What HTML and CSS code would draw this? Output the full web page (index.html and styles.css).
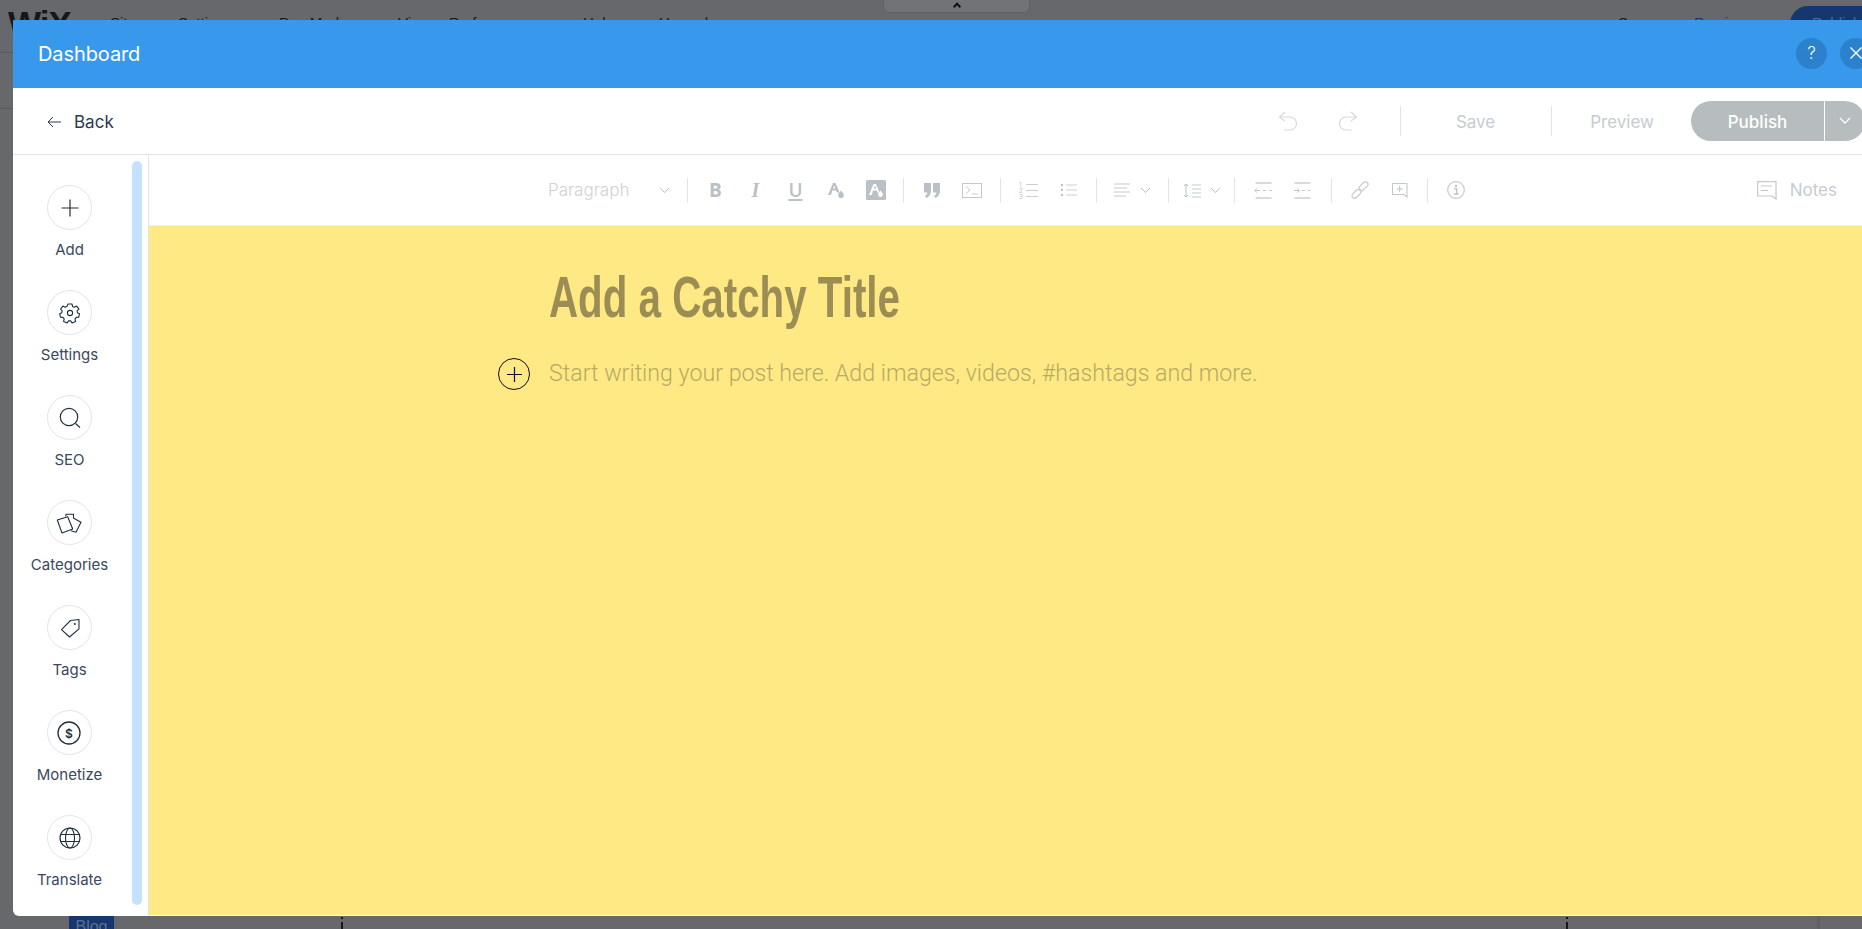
FILE: index.html
```html
<!DOCTYPE html>
<html lang="en">
<head>
<meta charset="utf-8">
<title>Dashboard</title>
<link rel="stylesheet" href="styles.css">
</head>
<body>
<div class="editor">
  <div class="editor-top">
    <span class="logo">WiX</span>
    <nav class="editor-nav"><span>Site</span><span>Settings</span><span>Dev Mode</span><span>View</span><span>Preferences</span><span>Help</span><span>Upgrade</span></nav>
    <div class="editor-tab"><svg width="10" height="7" viewBox="0 0 12 8"><path d="M2 6l4-4 4 4" fill="none" stroke="#111" stroke-width="2.500"/></svg></div>
    <div class="editor-actions"><span class="ea-save">Save</span><span class="ea-preview">Preview</span><span class="ea-publish">Publish</span></div>
  </div>
  <div class="editor-sub"></div>
  <div class="editor-fill"></div>
  <div class="editor-foot">
    <span class="blog-chip">Blog</span>
    <i class="tick tick-a"></i>
    <i class="tick tick-b"></i>
    <i class="foot-panel"></i>
  </div>
</div>

<section class="modal">
  <header class="modal-head">
    <h1 class="modal-title">Dashboard</h1>
    <div class="head-btns">
      <button class="round-btn">?</button>
      <button class="round-btn"><svg width="16" height="16" viewBox="0 0 16 16"><path d="M2.500 2.500l11 11M13.500 2.500l-11 11" stroke="#fff" stroke-width="1.400" fill="none"/></svg></button>
    </div>
  </header>

  <div class="actionbar">
    <div class="back">
      <svg width="14" height="12" viewBox="0 0 14 12"><path d="M14 6H1M6 1L1 6l5 5" fill="none" stroke="#2b3a4f" stroke-width="1"/></svg>
      <span>Back</span>
    </div>
    <div class="actions">
      <svg class="ico-undo" width="20" height="20" viewBox="0 0 20 20"><path d="M7 1L1.500 6 7 10M2 6h10a6.500 6.500 0 0 1 0 13H6" fill="none" stroke="#d5dade" stroke-width="1.200"/></svg>
      <svg class="ico-redo" width="20" height="20" viewBox="0 0 20 20"><path d="M13 1l5.500 5L13 10M18 6H8a6.500 6.500 0 0 0 0 13h6" fill="none" stroke="#d5dade" stroke-width="1.200"/></svg>
      <i class="act-sep"></i>
      <span class="act-save">Save</span>
      <i class="act-sep"></i>
      <span class="act-preview">Preview</span>
      <div class="publish">
        <span class="publish-main">Publish</span>
        <span class="publish-more"><svg width="12" height="8" viewBox="0 0 12 8"><path d="M1 1l5 5 5-5" fill="none" stroke="#fff" stroke-width="1.300"/></svg></span>
      </div>
    </div>
  </div>

  <div class="body">
    <aside class="side">
      <div class="side-list">
        <div class="side-item"><span class="side-circle"><svg width="20" height="20" viewBox="0 0 20 20"><path d="M10 1.500v17M1.500 10h17" stroke="#20303c" stroke-width="1.200" fill="none"/></svg></span><span class="side-label">Add</span></div>
        <div class="side-item"><span class="side-circle"><svg width="22" height="22" viewBox="0 0 22 22"><path d="M9 2h4l.6 2.500 1.700.8 2.300-1.200 2.300 3-1.800 1.800.3 1.900 2.100 1-.8 3.500-2.500.1-1.200 1.500.6 2.500-3.500 1.500-1.500-2h-2l-1.500 2-3.500-1.500.6-2.500-1.200-1.500-2.500-.1-.8-3.500 2.100-1 .3-1.900L1.600 7.100l2.300-3 2.300 1.200 1.700-.8z" fill="none" stroke="#20303c" stroke-width="1.100" stroke-linejoin="round"/><circle cx="11" cy="11" r="2.600" fill="none" stroke="#20303c" stroke-width="1.100"/></svg></span><span class="side-label">Settings</span></div>
        <div class="side-item"><span class="side-circle"><svg width="22" height="22" viewBox="0 0 22 22"><circle cx="10" cy="10" r="8.700" fill="none" stroke="#20303c" stroke-width="1.200"/><path d="M16.500 16.500l4.500 4" stroke="#20303c" stroke-width="1.200" fill="none"/></svg></span><span class="side-label">SEO</span></div>
        <div class="side-item"><span class="side-circle"><svg width="26" height="24" viewBox="0 0 26 24"><path d="M1.300 9l10.400-3.300 5 12.300L6 22z" fill="none" stroke="#20303c" stroke-width="1.100" stroke-linejoin="round"/><path d="M9.700 5.300l.3-2h7.500V7M17.300 7L25 11.300 20 21.300 15 19.700" fill="none" stroke="#20303c" stroke-width="1.100" stroke-linejoin="round"/></svg></span><span class="side-label">Categories</span></div>
        <div class="side-item"><span class="side-circle"><svg width="22" height="22" viewBox="0 0 22 22"><path d="M20 2.500v9.300L10.500 20 2.500 12.700 11.500 3.500z" fill="none" stroke="#20303c" stroke-width="1.100" stroke-linejoin="round"/><circle cx="15.800" cy="7" r="1" fill="#20303c"/></svg></span><span class="side-label">Tags</span></div>
        <div class="side-item"><span class="side-circle"><svg width="24" height="24" viewBox="0 0 24 24"><circle cx="12" cy="12" r="11" fill="none" stroke="#20303c" stroke-width="1.300"/><text x="12" y="16.500" class="dollar">$</text></svg></span><span class="side-label">Monetize</span></div>
        <div class="side-item"><span class="side-circle"><svg width="22" height="22" viewBox="0 0 22 22"><circle cx="11" cy="11" r="10" fill="none" stroke="#20303c" stroke-width="1.200"/><ellipse cx="11" cy="11" rx="4.500" ry="10" fill="none" stroke="#20303c" stroke-width="1.100"/><path d="M2 7.500h18M2 14.500h18" stroke="#20303c" stroke-width="1.100" fill="none"/></svg></span><span class="side-label">Translate</span></div>
      </div>
      <div class="side-scroll"></div>
    </aside>

    <main class="main">
      <div class="toolbar">
        <div class="para"><span>Paragraph</span><svg width="11" height="7" viewBox="0 0 11 7"><path d="M1 1l4.500 4.500L10 1" fill="none" stroke="#b9c1c6" stroke-width="1"/></svg></div>
        <i class="tsep"></i>
        <span class="tbtn tb-b">B</span>
        <span class="tbtn tb-i">I</span>
        <span class="tbtn tb-u">U</span>
        <span class="tbtn"><svg width="18" height="18" viewBox="0 0 18 18"><path d="M1 14L6 2h2.500l4 9.500H9.800L9 9.500H5.300L4 14zM6 7.500h2.400L7.200 4.500z" fill="#b9c1c6"/><path d="M14 9.500c1.500 2 2.800 3.200 2.800 4.700a2.800 2.800 0 0 1-5.600 0c0-1.500 1.300-2.700 2.800-4.700z" fill="#b9c1c6"/></svg></span>
        <span class="tbtn"><svg width="20" height="20" viewBox="0 0 20 20"><rect width="20" height="20" rx="1.500" fill="#b9c1c6"/><path d="M3 15L7.500 4h2.500l3.500 8.500h-2.300L11 10.500H7L5.800 15zM7.700 8.500h2.500L9 5.500z" fill="#fff"/><path d="M14.500 10.500c1.300 1.800 2.400 2.800 2.400 4a2.400 2.400 0 0 1-4.800 0c0-1.200 1.100-2.200 2.400-4z" fill="#fff"/></svg></span>
        <i class="tsep"></i>
        <span class="tbtn"><svg width="16" height="15" viewBox="0 0 16 15"><path d="M0 0h7v7.500C7 11 5.500 13.500 2.500 15L1 13c1.500-.8 2.300-2 2.400-3.500H0zM9 0h7v7.500c0 3.500-1.500 6-4.500 7.500L10 13c1.500-.8 2.300-2 2.400-3.500H9z" fill="#b9c1c6"/></svg></span>
        <span class="tbtn"><svg width="20" height="15" viewBox="0 0 20 15"><rect x=".5" y=".5" width="19" height="14" fill="none" stroke="#c3cace"/><path d="M4 3.500L8 7l-4 3.500M10 11h6" fill="none" stroke="#c3cace"/></svg></span>
        <i class="tsep"></i>
        <span class="tbtn"><svg width="20" height="17" viewBox="0 0 20 17"><text x="0" y="5" class="mini">1</text><text x="0" y="11" class="mini">2</text><text x="0" y="17" class="mini">3</text><path d="M7 2.500h12M7 8.500h12M7 14.500h12" stroke="#c9d0d4" stroke-width="1.200" fill="none"/></svg></span>
        <span class="tbtn"><svg width="16" height="14" viewBox="0 0 16 14"><path d="M0 2h2M0 7h2M0 12h2" stroke="#b9c1c6" stroke-width="2" fill="none"/><path d="M5 2h11M5 7h11M5 12h11" stroke="#c9d0d4" stroke-width="1" fill="none"/></svg></span>
        <i class="tsep"></i>
        <span class="tbtn tb-align"><svg width="16" height="14" viewBox="0 0 16 14"><path d="M0 1h16M0 5h13M0 9h16M0 13h12" stroke="#c3cace" stroke-width="1" fill="none"/></svg><svg width="11" height="7" viewBox="0 0 11 7"><path d="M1 1l4.500 4.500L10 1" fill="none" stroke="#b9c1c6"/></svg></span>
        <i class="tsep"></i>
        <span class="tbtn tb-line"><svg width="18" height="15" viewBox="0 0 18 15"><path d="M3 1v13M1 3l2-2 2 2M1 12l2 2 2-2" fill="none" stroke="#b9c1c6"/><path d="M9 2h9M9 6h9M9 10h9M9 14h9" stroke="#c3cace" fill="none"/></svg><svg width="11" height="7" viewBox="0 0 11 7"><path d="M1 1l4.500 4.500L10 1" fill="none" stroke="#b9c1c6"/></svg></span>
        <i class="tsep"></i>
        <span class="tbtn"><svg width="18" height="17" viewBox="0 0 18 17"><path d="M1.500 1h16M1.500 16h16" stroke="#c9d0d4" stroke-width="1.500" fill="none"/><path d="M6 8.500H.8M3 6.300L.8 8.500 3 10.700M9 8.500h3M15 8.500h3" stroke="#c3cace" fill="none"/></svg></span>
        <span class="tbtn"><svg width="18" height="17" viewBox="0 0 18 17"><path d="M.5 1h16M.5 16h16" stroke="#c9d0d4" stroke-width="1.500" fill="none"/><path d="M0 8.500h5.500M3.300 6.300l2.200 2.200-2.200 2.200M8 8.500h3M13.500 8.500h3" stroke="#c3cace" fill="none"/></svg></span>
        <i class="tsep"></i>
        <span class="tbtn"><svg width="18" height="18" viewBox="0 0 18 18"><rect x="10" y="0" width="5" height="10.500" rx="2.500" transform="rotate(45 12.500 5.250)" fill="none" stroke="#c3cace" stroke-width="1.200"/><rect x="3" y="7.500" width="5" height="10.500" rx="2.500" transform="rotate(45 5.500 12.750)" fill="none" stroke="#c3cace" stroke-width="1.200"/></svg></span>
        <span class="tbtn"><svg width="16" height="15" viewBox="0 0 16 15"><path d="M15 14l-3-2.500H.5V.5h14.500z" fill="none" stroke="#c3cace" stroke-width="1.100"/><path d="M7.700 3v6M4.700 6h6" stroke="#b9c1c6" fill="none"/></svg></span>
        <i class="tsep"></i>
        <span class="tbtn"><svg width="18" height="18" viewBox="0 0 18 18"><circle cx="9" cy="9" r="8.300" fill="none" stroke="#c3cace" stroke-width="1.200"/><circle cx="9" cy="5" r="1.200" fill="#b9c1c6"/><path d="M7 7.800h2.700v5M7 13h4.500" fill="none" stroke="#b9c1c6" stroke-width="1.300"/></svg></span>
        <div class="notes"><svg width="20" height="19" viewBox="0 0 20 19"><path d="M19 18l-4-3H.7V.7H19zM4 5h11M4 9.500h7" fill="none" stroke="#c3cace" stroke-width="1.200"/></svg><span>Notes</span></div>
      </div>

      <div class="canvas">
        <div class="post">
          <h2 class="post-title">Add a Catchy Title</h2>
          <div class="post-line">
            <span class="post-add"><svg width="15" height="15" viewBox="0 0 15 15"><path d="M7.500 0v15M0 7.500h15" stroke="#111" stroke-width="1.200" fill="none"/></svg></span>
            <p class="post-ph">Start writing your post here. Add images, videos, #hashtags and more.</p>
          </div>
        </div>
      </div>
    </main>
  </div>
</section>
</body>
</html>
```

FILE: styles.css
```css
* { box-sizing: border-box; }
html, body { margin: 0; height: 100%; }
body {
  position: relative;
  width: 1862px;
  height: 929px;
  overflow: hidden;
  background: #67686b;
  font-family: Inter, "Open Sans", sans-serif;
}

/* dimmed editor behind the modal */
.editor { display: flex; flex-direction: column; height: 929px; }
.editor-top { position: relative; display: flex; height: 52px; align-items: flex-start; padding: 6px 0 0 8px; }
.logo { font: 700 35px/36px "Liberation Sans", sans-serif; color: #16171a; width: 102px; letter-spacing: -1px; }
.editor-nav { display: grid; grid-template-columns: 68px 101px 119px 51px 134px 76px auto; font: 15px/20px "Liberation Sans", sans-serif; color: #16171a; padding-top: 7px; }
.editor-tab {
  position: absolute; left: 883px; top: -5px; width: 147px; height: 18px;
  background: #727379; border: 1px solid #5f6064; border-radius: 6px;
  display: flex; justify-content: center; align-items: center;
  padding-top: 2px;
}
.editor-actions { position: absolute; left: 1618px; top: 6px; display: flex; align-items: flex-start; font: 15px/20px "Liberation Sans", sans-serif; }
.ea-save { color: #16171a; padding-top: 7px; width: 76px; }
.ea-preview { color: #16366f; padding-top: 7px; width: 96px; }
.ea-publish { background: #16366f; color: #5a6a8c; border-radius: 20px 0 0 20px; width: 90px; height: 36px; padding: 7px 0 0 22px; }
.editor-sub { height: 57px; border-top: 1px solid #5a5b5e; border-bottom: 1px solid #5a5b5e; }
.editor-fill { flex: 1; }
.editor-foot { position: relative; height: 13px; }
.blog-chip { position: absolute; left: 69px; top: 0; width: 45px; height: 13px; background: #16366f; color: #5f6f90; font: 16px/22px "Liberation Sans", sans-serif; text-align: center; overflow: hidden; }
.tick { position: absolute; top: 1px; width: 2px; height: 12px; background: linear-gradient(#16171a 2px, transparent 2px 5px, #16171a 5px); }
.tick-a { left: 341px; }
.tick-b { left: 1566px; }
.foot-panel { position: absolute; left: 1820px; right: 0; top: 0; bottom: 0; background: #67686b; box-shadow: -2px 0 3px #5c5d60; }

/* modal */
.modal {
  position: absolute; left: 13px; top: 20px; width: 1887px; height: 896px;
  display: flex; flex-direction: column;
  background: #fff; border-radius: 0 0 0 6px; overflow: hidden;
}
.modal-head {
  height: 68px; flex: none; background: #3899ec; color: #fff;
  display: flex; align-items: center; justify-content: space-between;
  padding: 0 29px 0 25px;
}
.modal-title { margin: 0; font-size: 20px; font-weight: 400; line-height: 68px; letter-spacing: -.1px; }
.head-btns { display: flex; gap: 13px; margin-top: -2px; }
.round-btn {
  width: 31px; height: 31px; border: 0; padding: 0; border-radius: 50%;
  background: #2b81cb; color: #fff; font: 300 17px/31px Inter, sans-serif;
  display: flex; align-items: center; justify-content: center;
}

.actionbar {
  height: 67px; flex: none; display: flex; align-items: center; justify-content: space-between;
  padding: 0 35px 0 34px; border-bottom: 1px solid #dfe5eb;
}
.back { display: flex; align-items: center; gap: 13px; font-size: 17px; color: #2b3a4f; padding-top: 1px; }
.actions { display: flex; align-items: center; color: #c6ccd0; font-size: 17px; }
.ico-undo { margin-right: 40px; }
.ico-redo { margin-right: 42px; }
.act-sep { width: 1px; height: 30px; background: #dfe5eb; }
.act-save { margin: 2px 56px 0 55px; }
.act-preview { margin: 2px 37px 0 38px; }
.publish { display: flex; height: 40px; width: 174px; border-radius: 20px; overflow: hidden; color: #fff; font-weight: 500; }
.publish-main { width: 133px; background: #b7bdbf; display: flex; align-items: center; justify-content: center; padding-top: 2px; }
.publish-more { flex: 1; margin-left: 1px; background: #b7bdbf; display: flex; align-items: center; justify-content: center; }

.body { flex: 1; display: flex; min-height: 0; }
.side { position: relative; width: 136px; flex: none; border-right: 1px solid #dfe5eb; display: flex; }
.side-list { width: 119px; display: flex; flex-direction: column; align-items: center; padding-top: 30px; gap: 23.500px; margin-left: -3px; }
.side-item { display: flex; flex-direction: column; align-items: center; gap: 11px; height: 81.500px; }
.side-circle { width: 45px; height: 45px; border-radius: 50%; border: 1px solid #dfe5eb; display: flex; align-items: center; justify-content: center; flex: none; }
.side-label { font-size: 15px; line-height: 17px; color: #3a4860; white-space: nowrap; }
.dollar { font: 600 12px Inter, sans-serif; fill: #20303c; text-anchor: middle; }
.side-scroll { position: absolute; left: 119px; top: 6px; bottom: 11px; width: 10px; background: #c2e2fe; border-radius: 5px; }

.main { flex: 1; display: flex; flex-direction: column; min-width: 0; }
.toolbar { height: 71px; flex: none; display: flex; align-items: center; padding: 0 63px 0 399px; color: #b9c1c6; border-bottom: 1px solid #eef0f2; }
.para { width: 131px; display: flex; align-items: center; justify-content: space-between; padding-right: 9px; font-size: 17px; color: #cdd2d6; font-weight: 300; }
.tsep { width: 1px; height: 25px; background: #dfe5eb; margin: 0 7.750px; flex: none; }
.tbtn { width: 40px; height: 25px; display: flex; align-items: center; justify-content: center; flex: none; font-size: 18px; line-height: 25px; }
.tb-b { font-family: "Open Sans", sans-serif; font-weight: 700; font-size: 19px; }
.tb-i { font-family: "Liberation Serif", serif; font-style: italic; font-weight: 700; font-size: 20px; }
.tb-u { font-family: "Open Sans", sans-serif; font-size: 19px; font-weight: 600; text-decoration: underline; text-decoration-thickness: 2px; text-underline-offset: 2px; }
.tb-align { width: 55px; gap: 10px; }
.tb-line { width: 50px; gap: 9px; }
.mini { font: 6px Inter, sans-serif; fill: #b9c1c6; }
.notes { margin-left: auto; display: flex; align-items: center; gap: 13px; font-size: 17px; color: #c6ccd0; height: 24px; }

.canvas { flex: 1; background: #fee984; border-bottom: 1px solid #fff; }
.post { padding: 41px 0 0 400px; }
.post-title { margin: 0; font: 700 58px/60px "Liberation Sans", sans-serif; color: #9c8d54; transform: scaleX(.695); transform-origin: left center; white-space: nowrap; }
.post-line { position: relative; margin-top: 29px; height: 34px; display: flex; align-items: center; }
.post-add { position: absolute; left: -51px; top: 2px; width: 32px; height: 32px; border: 1.200px solid #111; border-radius: 50%; display: flex; align-items: center; justify-content: center; }
.post-ph { margin: 0; font: 300 23.200px/34px Roboto, sans-serif; color: #b8aa63; white-space: nowrap; }
```
